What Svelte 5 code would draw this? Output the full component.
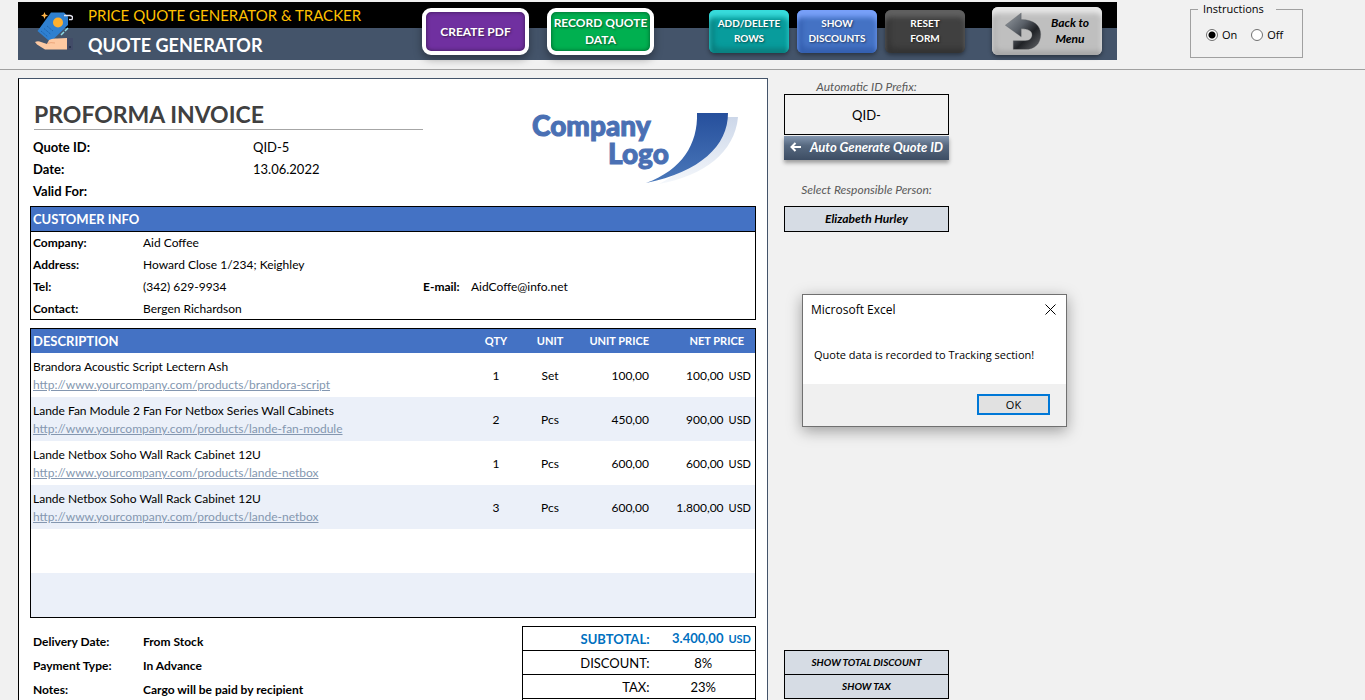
<script>
let instructions = 'on';
let prefix = 'QID-';
let person = 'Elizabeth Hurley';
let showMessage = true;

const people = ['Elizabeth Hurley', 'Bergen Richardson'];

const quote = [
    { label: 'Quote ID:', value: 'QID-5' },
    { label: 'Date:', value: '13.06.2022' },
    { label: 'Valid For:', value: '' },
];

const customer = [
    { label: 'Company:', value: 'Aid Coffee' },
    { label: 'Address:', value: 'Howard Close 1/234; Keighley' },
    { label: 'Tel:', value: '(342) 629-9934', label2: 'E-mail:', value2: 'AidCoffe@info.net' },
    { label: 'Contact:', value: 'Bergen Richardson' },
];

const shop = 'http://www.yourcompany.com/products/';
const items = [
    { name: 'Brandora Acoustic Script Lectern Ash', link: 'brandora-script', qty: 1, unit: 'Set', price: '100,00', net: '100,00' },
    { name: 'Lande Fan Module 2 Fan For Netbox Series Wall Cabinets', link: 'lande-fan-module', qty: 2, unit: 'Pcs', price: '450,00', net: '900,00' },
    { name: 'Lande Netbox Soho Wall Rack Cabinet 12U', link: 'lande-netbox', qty: 1, unit: 'Pcs', price: '600,00', net: '600,00' },
    { name: 'Lande Netbox Soho Wall Rack Cabinet 12U', link: 'lande-netbox', qty: 3, unit: 'Pcs', price: '600,00', net: '1.800,00' },
    null,
    null,
];

const terms = [
    { label: 'Delivery Date:', value: 'From Stock' },
    { label: 'Payment Type:', value: 'In Advance' },
    { label: 'Notes:', value: 'Cargo will be paid by recipient' },
];

const closeMessage = () => {
    showMessage = false;
}
</script>

<div class="app">
    <header class="top">
        <div class="banner">
            <svg class="banner__icon" viewBox="0 0 38 40" aria-hidden="true">
                <path d="M9.500 1 L10.500 3.500 L13 4.500 L10.500 5.500 L9.500 8 L8.500 5.500 L6 4.500 L8.500 3.500 Z" fill="#ffb54a" />
                <path d="M16 1.500 H29 L33 5.500 V14 L17.500 29 H13 L2.500 20 Z" fill="#2f80d0" />
                <path d="M6 20 l7 6 M9 17.500 l7 6 M12 15 l6 5" stroke="#1f64ad" stroke-width="1" stroke-dasharray="2 1" />
                <circle cx="23" cy="11.500" r="5" fill="#ffb02e" />
                <path d="M29 4.500 H35 Q38 5 37.500 7.500 Q37 9 34 8.500" fill="none" stroke="#e4e4f0" stroke-width="1.500" />
                <path d="M26 24 L29 21 M30 20 L33 17" stroke="#8fdde6" stroke-width="1.500" />
                <path d="M0 31 Q3 29.500 6 31 L12 33 L14 29 Q17 27 22 27.500 L32 27 V38.500 H10 L2 33.500 Z" fill="#fdc9a2" />
                <path d="M12 32.500 Q16 31 20 32" stroke="#eda77c" stroke-width="1" fill="none" />
                <path d="M32 27 H38 V39 H32 Z" fill="#424c68" />
                <circle cx="35" cy="36" r="1" fill="#222b45" />
            </svg>
            <div class="banner__titles">
                <p class="banner__product">PRICE QUOTE GENERATOR &amp; TRACKER</p>
                <h1 class="banner__page">QUOTE GENERATOR</h1>
            </div>
            <div class="banner__actions">
                <div class="group group--main">
                    <button class="bttn bttn--framed bttn--purple" type="button">CREATE PDF</button>
                    <button class="bttn bttn--framed bttn--green" type="button">RECORD QUOTE DATA</button>
                </div>
                <div class="group">
                    <button class="bttn bttn--teal" type="button">ADD/DELETE ROWS</button>
                    <button class="bttn bttn--blue" type="button">SHOW DISCOUNTS</button>
                    <button class="bttn bttn--dark" type="button">RESET<br />FORM</button>
                </div>
                <button class="bttn bttn--back" type="button">
                    <svg viewBox="670 35 115 115" aria-hidden="true">
                        <defs>
                            <linearGradient id="arrow" x1="0" y1="0" x2="1" y2="1">
                                <stop offset="0" stop-color="#9aa0a6" />
                                <stop offset="0.400" stop-color="#5a6068" />
                                <stop offset="0.650" stop-color="#202226" />
                                <stop offset="1" stop-color="#66686c" />
                            </linearGradient>
                        </defs>
                        <path d="M674 75 L722 38 V58 C762 58 781 78 781 102 C781 132 762 148 735 148 H698 V122 H734 C748 122 755 114 755 104 C755 92 742 86 722 86 V110 Z" fill="url(#arrow)" stroke="#55585c" stroke-width="1" />
                    </svg>
                    <span>Back to Menu</span>
                </button>
            </div>
        </div>
        <fieldset class="instructions">
            <legend>Instructions</legend>
            <label><input type="radio" name="instructions" value="on" bind:group={instructions} />On</label>
            <label><input type="radio" name="instructions" value="off" bind:group={instructions} />Off</label>
        </fieldset>
    </header>

    <main class="work">
        <section class="sheet">
            <div class="sheet__head">
                <div class="sheet__intro">
                    <h2>PROFORMA INVOICE</h2>
                    {#each quote as row}
                        <div class="quote-row">
                            <b>{row.label}</b>
                            <span>{row.value}</span>
                        </div>
                    {/each}
                </div>
                <svg class="logo" viewBox="0 -12 208 88" role="img" aria-label="Company Logo">
                    <defs>
                        <linearGradient id="swoosh" x1="0" y1="0" x2="0" y2="1">
                            <stop offset="0" stop-color="#264f9c" />
                            <stop offset="1" stop-color="#4a78ba" />
                        </linearGradient>
                        <linearGradient id="shade" x1="0" y1="0" x2="0" y2="1">
                            <stop offset="0" stop-color="#ccd7e9" />
                            <stop offset="1" stop-color="#f4f7fb" />
                        </linearGradient>
                    </defs>
                    <path d="M176 7 H206 C203 42 172 66 127 74 C155 60 175 38 176 7 Z" fill="url(#shade)" />
                    <path d="M165 3 H196 C196 36 168 62 114 73 C150 60 166 34 165 3 Z" fill="url(#swoosh)" />
                    <text x="0" y="26">Company</text>
                    <text x="76" y="54">Logo</text>
                </svg>
            </div>

            <div class="customer">
                <h3 class="band">CUSTOMER INFO</h3>
                {#each customer as row}
                    <div class="customer__row">
                        <b>{row.label}</b>
                        <span>{row.value}</span>
                        {#if row.label2}
                            <b>{row.label2}</b>
                            <span>{row.value2}</span>
                        {/if}
                    </div>
                {/each}
            </div>

            <table class="items">
                <thead>
                    <tr>
                        <th class="items__desc">DESCRIPTION</th>
                        <th class="items__small">QTY</th>
                        <th class="items__small">UNIT</th>
                        <th class="items__price">UNIT PRICE</th>
                        <th class="items__net">NET PRICE</th>
                    </tr>
                </thead>
                <tbody>
                    {#each items as item}
                        <tr>
                            {#if item}
                                <td class="items__desc">
                                    <span>{item.name}</span>
                                    <a href={shop + item.link}>{shop + item.link}</a>
                                </td>
                                <td class="items__small">{item.qty}</td>
                                <td class="items__small">{item.unit}</td>
                                <td class="items__price">{item.price}</td>
                                <td class="items__net">{item.net}<span class="currency">USD</span></td>
                            {:else}
                                <td colspan="5"></td>
                            {/if}
                        </tr>
                    {/each}
                </tbody>
            </table>

            <div class="sheet__foot">
                <div class="terms">
                    {#each terms as row}
                        <div class="terms__row">
                            <span>{row.label}</span>
                            <span>{row.value}</span>
                        </div>
                    {/each}
                </div>
                <table class="totals">
                    <tbody>
                        <tr class="totals__sub">
                            <th>SUBTOTAL:</th>
                            <td>3.400,00<span class="currency">USD</span></td>
                        </tr>
                        <tr>
                            <th>DISCOUNT:</th>
                            <td>8%</td>
                        </tr>
                        <tr>
                            <th>TAX:</th>
                            <td>23%</td>
                        </tr>
                        <tr>
                            <th></th>
                            <td></td>
                        </tr>
                    </tbody>
                </table>
            </div>
        </section>

        <aside class="side">
            <label class="side__label" for="prefix">Automatic ID Prefix:</label>
            <input class="side__prefix" id="prefix" type="text" bind:value={prefix} />
            <button class="side__generate" type="button">
                <svg viewBox="0 0 12 10" aria-hidden="true">
                    <path d="M11 5 H2 M5.500 1 L1.500 5 L5.500 9" fill="none" stroke="#fff" stroke-width="2" />
                </svg>
                <span>Auto Generate Quote ID</span>
            </button>
            <label class="side__label side__label--person" for="person">Select Responsible Person:</label>
            <select class="side__person" id="person" bind:value={person}>
                {#each people as name}
                    <option value={name}>{name}</option>
                {/each}
            </select>
            <div class="side__toggles">
                <button type="button">SHOW TOTAL DISCOUNT</button>
                <button type="button">SHOW TAX</button>
            </div>
        </aside>
    </main>

    {#if showMessage}
        <div class="message" role="dialog" aria-labelledby="message-title">
            <div class="message__bar">
                <span id="message-title">Microsoft Excel</span>
                <button class="message__close" type="button" aria-label="Close" on:click={closeMessage}>
                    <svg viewBox="0 0 11 11" aria-hidden="true"><path d="M0.500 0.500 L10.500 10.500 M10.500 0.500 L0.500 10.500" stroke="#000" fill="none" /></svg>
                </button>
            </div>
            <p>Quote data is recorded to Tracking section!</p>
            <div class="message__foot">
                <button class="message__ok" type="button" on:click={closeMessage}>OK</button>
            </div>
        </div>
    {/if}
</div>

<style>
:global(body) {
    background: #f1f1f1;
}

.app {
    position: relative;
    height: 100vh;
    overflow: hidden;
    font-family: Lato, "Liberation Sans", sans-serif;
    font-size: 12px;
    line-height: 18px;
    color: #000;
}

.app :global(*) {
    box-sizing: border-box;
}

h1, h2, h3, p {
    margin: 0;
}

button, input, select {
    font-family: inherit;
    margin: 0;
}

svg {
    display: block;
}

.top {
    display: flex;
    align-items: flex-start;
    gap: 73px;
    padding: 2px 62px 9px 18px;
    border-bottom: 1px solid #a0a0a0;
}

/* Banner */
.banner {
    flex: 1;
    display: flex;
    height: 58px;
    padding: 0 15px 0 17px;
    background: linear-gradient(#000 26px, #44546a 26px);
}

.banner__icon {
    width: 38px;
    height: 40px;
    margin: 9px 15px 0 0;
}

.banner__titles {
    flex: 1;
    white-space: nowrap;
}

.banner__product {
    font-size: 15px;
    line-height: 27px;
    color: #ffc000;
}

.banner__page {
    font-size: 18px;
    line-height: 32px;
    font-weight: bold;
    color: #fff;
}

.banner__actions {
    display: flex;
    align-items: center;
    gap: 27px;
}

.group {
    display: flex;
    gap: 8px;
}

.group--main {
    gap: 18px;
    margin-right: 28px;
}

.bttn {
    width: 80px;
    height: 43px;
    padding: 0;
    border: none;
    border-radius: 6px;
    color: #fff;
    font-size: 10px;
    line-height: 15px;
    font-weight: bold;
    text-shadow: 1px 1px 2px rgba(0, 0, 0, 0.5);
}

.bttn--framed {
    width: 107px;
    height: 47px;
    border: 4px solid #fff;
    border-radius: 9px;
    font-size: 12px;
    line-height: 17px;
    box-shadow: 0 4px 8px rgba(0, 0, 0, 0.35), inset 0 0 4px rgba(0, 0, 0, 0.5);
}

.bttn--purple {
    background: #7030a0;
}

.bttn--green {
    background: #00b050;
}

.bttn--teal {
    background: #089c9c;
    box-shadow: inset 0 7px 5px #38dcdc, inset 5px -5px 5px #0a8080, 0 2px 4px rgba(0, 0, 0, 0.4);
}

.bttn--blue {
    background: #4472c4;
    box-shadow: inset 0 7px 5px #78a0f8, inset 5px -5px 5px #3560b0, 0 2px 4px rgba(0, 0, 0, 0.4);
}

.bttn--dark {
    background: #404040;
    box-shadow: inset 0 7px 5px #606060, inset 5px -5px 5px #343434, 0 2px 4px rgba(0, 0, 0, 0.4);
}

.bttn--back {
    display: flex;
    align-items: center;
    gap: 4px;
    width: 110px;
    height: 48px;
    padding: 0 8px 0 12px;
    background: #bfbfbf;
    box-shadow: inset 0 6px 5px #e8e8e8, inset 3px -4px 5px #a6a6a6, 0 2px 4px rgba(0, 0, 0, 0.4);
    color: #000;
    font-size: 12px;
    line-height: 16px;
    font-style: italic;
    text-shadow: none;
}

.bttn--back svg {
    flex: none;
    width: 38px;
    height: 38px;
}

.bttn--back span {
    flex: 1;
}

/* Instructions switch */
.instructions {
    display: flex;
    gap: 14px;
    width: 113px;
    height: 56px;
    margin: 0;
    padding: 12px 0 0 15px;
    border: 1px solid #a0a0a0;
    font-family: "Open Sans", "Noto Sans", sans-serif;
    font-size: 11px;
}

.instructions legend {
    margin-left: -8px;
    padding: 0 12px 0 5px;
    line-height: 14px;
}

.instructions label {
    display: flex;
    align-items: center;
    gap: 4px;
    height: 14px;
}

.instructions input {
    appearance: none;
    width: 12px;
    height: 12px;
    border: 1px solid #707070;
    border-radius: 50%;
    background: #fff;
}

.instructions input:checked {
    background: radial-gradient(#000 3px, #fff 4px);
}

/* Invoice sheet */
.work {
    display: grid;
    grid-template-columns: minmax(0, 15fr) 165px minmax(0, 8fr);
    gap: 16px;
    padding: 8px 0 0 18px;
}

.sheet {
    padding: 0 11px 24px;
    background: #fff;
    border: 1px solid #44546a;
    border-left-color: #000;
}

.sheet__head {
    display: flex;
    justify-content: space-between;
    height: 127px;
    padding: 19px 16px 0 3px;
}

.sheet__intro {
    flex: 0 1 390px;
}

.sheet__intro h2 {
    height: 32px;
    margin: 0 0 6px 1px;
    border-bottom: 1px solid #a6a6a6;
    font-size: 23px;
    line-height: 32px;
    color: #404040;
}

.quote-row {
    display: grid;
    grid-template-columns: 220px 1fr;
    font-size: 13px;
    line-height: 22px;
}

.logo {
    flex: none;
    width: 208px;
    height: 88px;
}

.logo text {
    fill: #4a70b4;
    stroke: #4a70b4;
    stroke-width: 1px;
    font-family: Lato, sans-serif;
    font-size: 28px;
    font-weight: 900;
}

.band {
    height: 25px;
    padding-left: 2px;
    background: #4472c4;
    border-bottom: 1px solid #000;
    color: #fff;
    font-size: 13px;
    line-height: 24px;
}

.customer {
    height: 114px;
    border: 1px solid #000;
}

.customer__row {
    display: grid;
    grid-template-columns: 110px 280px 48px 1fr;
    padding-left: 2px;
    line-height: 22px;
}

.items {
    width: 100%;
    margin-top: 8px;
    border: 1px solid #000;
    border-spacing: 0;
    table-layout: fixed;
}

.items th {
    height: 24px;
    padding: 0;
    background: #4472c4;
    color: #fff;
    font-size: 11px;
}

.items td {
    height: 44px;
    padding: 2px 0 0;
}

.items tbody tr:nth-child(even) {
    background: #ebf0f9;
}

.items .items__desc {
    padding-left: 2px;
    text-align: left;
}

.items th.items__desc {
    font-size: 13px;
}

.items a {
    display: block;
    color: #8497b0;
}

.items__small {
    width: 54px;
    text-align: center;
}

.items .items__price {
    width: 76px;
    padding-right: 4px;
    text-align: right;
}

.items .items__net {
    width: 102px;
    padding-right: 4px;
    text-align: right;
}

.items th.items__net {
    padding-right: 11px;
}

.currency {
    margin-left: 5px;
    font-size: 11px;
}

.sheet__foot {
    display: flex;
    justify-content: space-between;
    align-items: flex-start;
    padding-top: 8px;
}

.terms {
    padding: 4px 0 0 3px;
    font-weight: bold;
}

.terms__row {
    display: grid;
    grid-template-columns: 110px 1fr;
    line-height: 24px;
}

.totals {
    width: 234px;
    border-collapse: collapse;
    font-size: 13px;
}

.totals tr {
    border: 1px solid #000;
}

.totals th, .totals td {
    height: 24px;
    padding: 0;
    line-height: 18px;
}

.totals th {
    width: 127px;
    font-weight: normal;
    text-align: right;
}

.totals td {
    padding-left: 2px;
    text-align: center;
}

.totals .totals__sub th, .totals .totals__sub td {
    color: #0070c0;
    font-weight: bold;
}

.totals .totals__sub td {
    padding-right: 4px;
    text-align: right;
}

/* Side panel */
.side {
    display: flex;
    flex-direction: column;
}

.side__label {
    height: 16px;
    color: #595959;
    font-size: 12px;
    font-style: italic;
    text-align: center;
    white-space: nowrap;
}

.side__label--person {
    height: 25px;
    margin-top: 21px;
}

.side__prefix {
    width: 100%;
    height: 41px;
    border: 1px solid #000;
    background: #f2f2f2;
    font-size: 13px;
    text-align: center;
}

.side__generate {
    display: flex;
    align-items: center;
    gap: 8px;
    height: 24px;
    margin-top: 1px;
    padding: 0 4px 2px 6px;
    border: none;
    background: linear-gradient(#8497b0, #56687f 40%, #3d4d63);
    box-shadow: 0 3px 4px rgba(0, 0, 0, 0.35);
    color: #fff;
    font-size: 13px;
    font-weight: bold;
    font-style: italic;
    white-space: nowrap;
}

.side__generate svg {
    flex: none;
    width: 12px;
    height: 10px;
}

.side__person {
    appearance: none;
    width: 100%;
    height: 26px;
    padding: 0 0 2px;
    border: 1px solid #000;
    border-radius: 0;
    background: #d6dce4;
    color: #000;
    font-size: 12px;
    font-weight: bold;
    font-style: italic;
    text-align: center;
    text-align-last: center;
}

.side__toggles {
    margin-top: 418px;
    border: 1px solid #000;
}

.side__toggles button {
    display: block;
    width: 100%;
    height: 23px;
    padding: 0 0 2px;
    border: none;
    background: #d6dce4;
    color: #000;
    font-size: 10px;
    font-weight: bold;
    font-style: italic;
}

.side__toggles button + button {
    height: 24px;
    border-top: 1px solid #000;
}

/* Message window over the sheet */
.message {
    position: absolute;
    top: 294px;
    left: 802px;
    width: 265px;
    border: 1px solid #707070;
    background: #fff;
    box-shadow: 0 4px 14px rgba(0, 0, 0, 0.35);
    font-family: "Open Sans", "Noto Sans", sans-serif;
    font-size: 11px;
}

.message__bar {
    display: flex;
    align-items: center;
    justify-content: space-between;
    height: 30px;
    padding: 0 10px 0 8px;
    font-size: 12px;
}

.message__close {
    padding: 0 0 2px;
    border: none;
    background: none;
}

.message__close svg {
    width: 11px;
    height: 11px;
}

.message p {
    padding: 21px 0 20px 11px;
    white-space: nowrap;
}

.message__foot {
    display: flex;
    justify-content: flex-end;
    padding: 10px 16px 11px;
    background: #f0f0f0;
}

.message__ok {
    width: 73px;
    height: 21px;
    padding: 0;
    border: 2px solid #0078d7;
    background: #e1e1e1;
    color: #000;
    font-size: 11px;
    line-height: 17px;
}
</style>
